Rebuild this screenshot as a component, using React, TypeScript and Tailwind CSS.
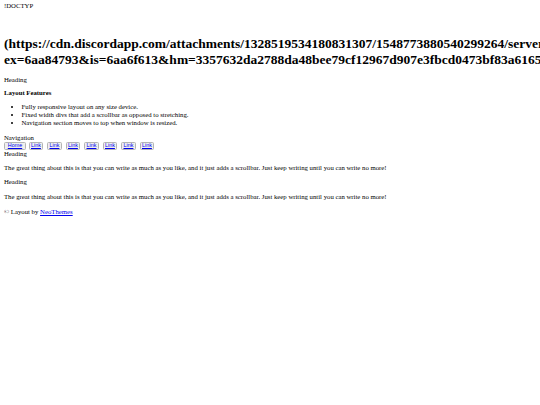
import React from "react";

const para =
  "The great thing about this is that you can write as much as you like, and it just adds a scrollbar. Just keep writing until you can write no more!";

function NavButton({ label, wide }: { label: string; wide?: boolean }) {
  return (
    <span
      className={
        (wide ? "w-[22px] " : "w-[14.5px] ") +
        "inline-flex h-[8px] items-center justify-center rounded-[1.5px] border border-[#b4b4b4] bg-[#efefef] [font-family:'Liberation_Sans',Arial,sans-serif] text-[5.4px] leading-none"
      }
    >
      <a href="#" className="text-[#0000ee] underline">
        {label}
      </a>
    </span>
  );
}

export default function App() {
  const links = ["Link", "Link", "Link", "Link", "Link", "Link", "Link"];
  return (
    <div className="h-[405px] w-[540px] overflow-hidden bg-white [font-family:'Liberation_Serif','Times_New_Roman',serif] text-[6.75px] leading-[8px] text-black">
      <div className="px-[4px] pt-[2px]">
        <div>!DOCTYP</div>

        <h1 className="mt-[25.6px] whitespace-nowrap text-[13.5px] font-bold leading-[16px]">
          <div>
            (https://cdn.discordapp.com/attachments/1328519534180831307/1548773880540299264/server_banner.png?
          </div>
          <div>
            ex=6aa84793&amp;is=6aa6f613&amp;hm=3357632da2788da48bee79cf12967d907e3fbcd0473bf83a6165b2f1&amp;)
          </div>
        </h1>

        <div className="mt-[8.5px]">Heading</div>

        <h4 className="mt-[5px] font-bold">Layout Features</h4>

        <ul className="mt-[5.5px] list-disc pl-[17.5px] leading-[8.25px]">
          <li>Fully responsive layout on any size device.</li>
          <li>Fixed width divs that add a scrollbar as opposed to stretching.</li>
          <li>Navigation section moves to top when window is resized.</li>
        </ul>

        <div className="mt-[6.5px]">Navigation</div>
        <div className="mt-[0.3px] flex gap-[4px]">
          <span className="-mr-[1.3px] flex">
            <NavButton label="Home" wide />
          </span>
          {links.map((l, i) => (
            <NavButton key={i} label={l} />
          ))}
        </div>

        <div className="-mt-[0.2px]">Heading</div>
        <p className="mt-[6px]">{para}</p>
        <div className="mt-[6.3px]">Heading</div>
        <p className="mt-[6.3px]">{para}</p>
        <p className="mt-[7px]">
          © Layout by{" "}
          <a href="#" className="text-[#0000ee] underline">
            NeoThemes
          </a>
        </p>
      </div>
    </div>
  );
}
